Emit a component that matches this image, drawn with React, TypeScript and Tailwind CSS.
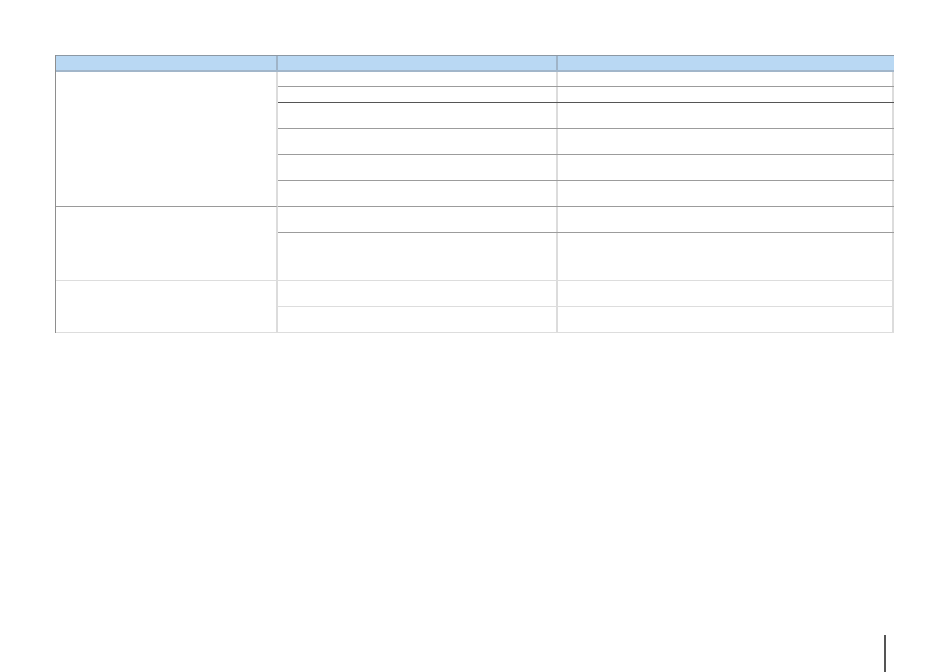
export default function App() {
  const groups = [
    {
      left: "border-[#9a9a9a]",
      rows: [
        { h: "h-[15px]", line: "border-[#9c9c9c]" },
        { h: "h-[16px]", line: "border-[#555555]" },
        { h: "h-[26px]", line: "border-[#9c9c9c]" },
        { h: "h-[26px]", line: "border-[#9c9c9c]" },
        { h: "h-[26px]", line: "border-[#9c9c9c]" },
        { h: "h-[26px]", line: "border-[#9c9c9c]" },
      ],
    },
    {
      left: "border-[#dddddd]",
      rows: [
        { h: "h-[26px]", line: "border-[#9c9c9c]" },
        { h: "h-[48px]", line: "border-[#dddddd]" },
      ],
    },
    {
      left: "border-[#dddddd]",
      rows: [
        { h: "h-[26px]", line: "border-[#dddddd]" },
        { h: "h-[26px]", line: "border-[#dddddd]" },
      ],
    },
  ]

  return (
    <div className="flex h-[672px] w-[950px] flex-col bg-white">
      {/* Table */}
      <div className="ml-[55px] mt-[55px] w-[839px] border-l border-[#8e8e8e]">
        {/* Header */}
        <div className="flex h-[17px] border-t border-b-2 border-t-[#8c98a4] border-b-[#a2b6ca] bg-[#b9d8f3]">
          <div className="w-[222px] border-r-2 border-[#9fb4c8]" />
          <div className="w-[280px] border-r-2 border-[#9fb4c8]" />
          <div className="flex-1" />
        </div>

        {/* Body */}
        {groups.map((g, gi) => (
          <div key={gi} className="flex">
            <div className={`w-[222px] border-r-2 border-b border-r-[#dcdcdc] ${g.left}`} />
            <div className="flex flex-1 flex-col">
              {g.rows.map((r, ri) => (
                <div key={ri} className={`flex border-b ${r.h} ${r.line}`}>
                  <div className="w-[280px] border-r-2 border-r-[#dcdcdc]" />
                  <div className="flex-1 border-r-2 border-r-[#dcdcdc]" />
                </div>
              ))}
            </div>
          </div>
        ))}
      </div>

      {/* Page marker */}
      <div className="ml-[884px] mt-auto h-[37px] w-[2px] bg-[#555555]" />
    </div>
  )
}
